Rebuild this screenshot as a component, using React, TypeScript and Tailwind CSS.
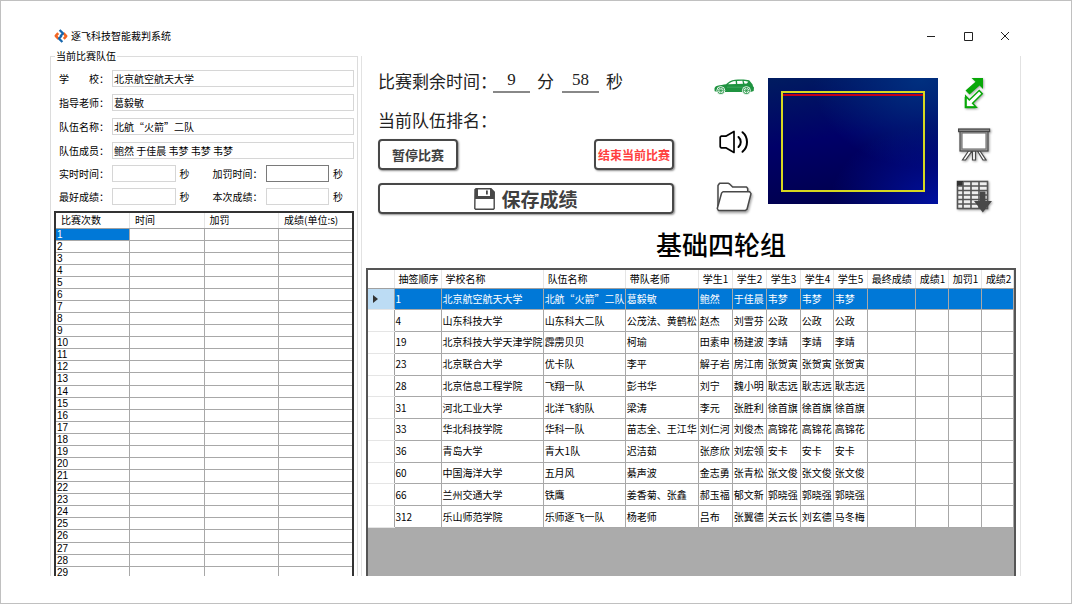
import type { ReactNode } from 'react'

const columns = [
    { name: '', width: 26 },
    { name: '抽签顺序', width: 47 },
    { name: '学校名称', width: 102 },
    { name: '队伍名称', width: 82 },
    { name: '带队老师', width: 73 },
    { name: '学生1', width: 34 },
    { name: '学生2', width: 34 },
    { name: '学生3', width: 34 },
    { name: '学生4', width: 33 },
    { name: '学生5', width: 34 },
    { name: '最终成绩', width: 48 },
    { name: '成绩1', width: 33 },
    { name: '加罚1', width: 33 },
    { name: '成绩2', width: 32 },
]

const teams = [
    ['1', '北京航空航天大学', '北航“火箭”二队', '葛毅敏', '鲍然', '于佳晨', '韦梦', '韦梦', '韦梦'],
    ['4', '山东科技大学', '山东科大二队', '公茂法、黄鹤松', '赵杰', '刘雪芬', '公政', '公政', '公政'],
    ['19', '北京科技大学天津学院', '霹雳贝贝', '柯瑜', '田素申', '杨建波', '李靖', '李靖', '李靖'],
    ['23', '北京联合大学', '优卡队', '李平', '解子岩', '房江南', '张贺寅', '张贺寅', '张贺寅'],
    ['28', '北京信息工程学院', '飞翔一队', '彭书华', '刘宁', '魏小明', '耿志远', '耿志远', '耿志远'],
    ['31', '河北工业大学', '北洋飞豹队', '梁涛', '李元', '张胜利', '徐首旗', '徐首旗', '徐首旗'],
    ['33', '华北科技学院', '华科一队', '苗志全、王江华', '刘仁河', '刘俊杰', '高锦花', '高锦花', '高锦花'],
    ['36', '青岛大学', '青大1队', '迟洁茹', '张彦欣', '刘宏领', '安卡', '安卡', '安卡'],
    ['60', '中国海洋大学', '五月风', '綦声波', '金志勇', '张青松', '张文俊', '张文俊', '张文俊'],
    ['66', '兰州交通大学', '铁鹰', '姜香菊、张鑫', '郝玉福', '郁文新', '郭晓强', '郭晓强', '郭晓强'],
    ['312', '乐山师范学院', '乐师逐飞一队', '杨老师', '吕布', '张翼德', '关云长', '刘玄德', '马冬梅'],
]

const info = [
    { id: 'school', label: '学　　校：', value: '北京航空航天大学' },
    { id: 'teacher', label: '指导老师：', value: '葛毅敏' },
    { id: 'team', label: '队伍名称：', value: '北航“火箭”二队' },
    { id: 'members', label: '队伍成员：', value: '鲍然 于佳晨 韦梦 韦梦 韦梦' },
]

const rounds = Array.from({ length: 29 }, (_, i) => i + 1)

function TimeField({ id, label, active }: { id: string, label: string, active?: boolean }) {
    return (
        <div className="flex min-w-0 flex-1 items-center">
            <label htmlFor={id} className="w-[53px] shrink-0">{label}</label>
            <input
                id={id}
                className={active ? 'h-[17px] w-0 flex-1 border border-[#7a7a7a] px-px' : 'h-[17px] w-0 flex-1 border border-[#d6d6d6] px-px'}
            />
            <span className="ml-1">秒</span>
        </div>
    )
}

function IconButton({ label, children }: { label: string, children: ReactNode }) {
    return (
        <button aria-label={label} className="flex h-9 w-10 items-center justify-center">
            {children}
        </button>
    )
}

function Logo() {
    return (
        <svg width="14" height="14" viewBox="0 0 14 14" fill="none" strokeWidth="2.6" strokeLinejoin="round">
            <path d="M4.2 4.2 1.8 6.8 4.6 10" stroke="#f26522" />
            <path d="M9.8 9.8 12.2 7.2 9.4 4" stroke="#f26522" />
            <path d="M5.600 1 9 4.400 6.300 7.200" stroke="#1767ad" strokeWidth="2.2" />
            <path d="M8.400 13 5 9.600 7.700 6.800" stroke="#1767ad" strokeWidth="2.2" />
        </svg>
    )
}

function CarIcon() {
    return (
        <svg width="40" height="16" viewBox="0 0 40 16">
            <path d="M.5 10.8C.2 8.6 1.2 7.4 3.5 6.8 6.2 6 9.4 5.7 12 5.2 14.3 3.2 17.3 1.1 21 .8 26 .3 32 .4 35.2 1.3L38.6 5.6 39 7.2 40 8.6 39.7 12 36.6 13H4L.7 12.2z" fill="#1f9340" />
            <path d="M14 5.3C16.2 3.4 18.4 2.2 21.6 2L21.9 5zM23 1.9 28.4 1.8 29 4.8 23.3 5zM29.6 1.9C31.6 1.9 33 2.2 34.3 2.8L32.8 4.4 30.6 4.7z" fill="#fff" />
            <path d="M4 8.3 6 7.6M13 8.2h19" stroke="#5fb67a" strokeWidth=".5" />
            <g fill="#1f9340" stroke="#fff" strokeWidth=".9">
                <circle cx="6.8" cy="11.6" r="4" />
                <circle cx="32.4" cy="11.6" r="4" />
            </g>
            <g fill="#fff">
                <circle cx="6.8" cy="11.6" r="2.7" />
                <circle cx="32.4" cy="11.6" r="2.7" />
            </g>
            <path d="M6.8 9v5.2M4.2 11.6h5.2M5 9.8l3.6 3.6M8.6 9.8 5 13.4M32.4 9v5.2M29.8 11.6H35M30.6 9.8l3.6 3.6M34.2 9.8l-3.6 3.6" stroke="#1f9340" strokeWidth=".7" />
        </svg>
    )
}

function SpeakerIcon() {
    return (
        <svg width="30" height="24" viewBox="0 0 30 24" fill="none" stroke="#000" strokeWidth="1.7" strokeLinecap="round" strokeLinejoin="round">
            <path d="M2.200 6.200h4.600l8.200-4.700v21l-8.200-4.700H2.200L1.200 16.800V7.200z" />
            <path d="M19.5 7c3 2.600 3 7.400 0 10M23.500 2.200c6 5 6 14.600 0 19.600" strokeWidth="2" />
        </svg>
    )
}

function FolderIcon() {
    return (
        <svg width="36" height="30" viewBox="0 0 36 30" className="drop-shadow-[1px_2px_1px_rgba(0,0,0,0.35)]">
            <g fill="#fff" stroke="#484848" strokeWidth="1.5" strokeLinejoin="round">
                <path d="M2 27V3.5L3.6 1.2H12l1.6.8 3 3H30.5l1.2 1.5V11" />
                <path d="M7 9.8 5.6 11 1.3 26.5 2.4 28.5H29.4L31 27.2 35 11.6 33.8 9.8z" />
            </g>
        </svg>
    )
}

function SwapIcon() {
    return (
        <svg width="20" height="32" viewBox="0 0 20 32" className="drop-shadow-[1px_1px_1px_rgba(0,0,0,0.35)]">
            <path d="M7.5 1H19V12L15.6 8.600 5.500 17.500 1.500 13.500 11.500 4.800z" fill="#08a808" />
            <path d="M15.200 13.500 18.200 16.700 8.600 26.200 12.200 30.200H1.700V19.200L5.300 23z" fill="#fff" stroke="#08a808" strokeWidth="1.5" />
            <path d="M1.700 20V30.200H11.500" fill="none" stroke="#08a808" strokeWidth="2" />
        </svg>
    )
}

function BoardIcon() {
    return (
        <svg width="34" height="34" viewBox="0 0 34 34" className="drop-shadow-[1px_1px_1px_rgba(0,0,0,0.35)]">
            <g fill="#fff" stroke="#484848" strokeWidth="1.2">
                <path d="M11.5 23 5.5 32H8.5L15 23zM20.5 23 26 32H29L23 23zM15.5 23v9h3v-9z" />
                <rect x="3" y="3" width="28" height="20" fill="#aaa" />
                <rect x="5" y="5" width="24" height="16" stroke="#777" />
                <rect x="1.6" y="1" width="31" height="2.6" fill="#888" />
            </g>
        </svg>
    )
}

function GridDownIcon() {
    return (
        <svg width="36" height="34" viewBox="0 0 36 34" className="drop-shadow-[1px_1px_1px_rgba(0,0,0,0.35)]">
            <rect x="1.5" y="1.500" width="30" height="27" fill="#eee" stroke="#555" strokeWidth="1.6" />
            <path d="M1 1h6v5H1z" fill="#333" />
            <path d="M2 6h29M2 10.500h29M2 15h29M2 19.500h29M2 24h29M7 2v26M15 2v26M23 2v26" stroke="#555" strokeWidth="1.6" />
            <path d="M24 11.500h5.500V21H36L26.800 32.500 18 21h6z" fill="#484848" />
        </svg>
    )
}

function SaveIcon() {
    return (
        <svg width="21" height="22" viewBox="0 0 21 22">
            <path d="M1 1.5 2 .8H17L20.2 4V20.4L19.4 21.2H1.600L.8 20.400z" fill="#fff" stroke="#484848" strokeWidth="1.4" />
            <path d="M1 1H4v7h12V1h1L20.400 4V11H1z" fill="#484848" />
            <path d="M12 2.500h1.800v4H12z" fill="#484848" />
        </svg>
    )
}

function TeamPanel() {
    return (
        <fieldset className="min-w-0 border-x border-t border-[#dcdcdc] px-[3px]">
            <legend className="ml-px px-px text-[10px] leading-4">当前比赛队伍</legend>
            <div className="flex flex-col gap-[7px] pt-[6px] pl-[5px]">
                {info.map((item) => (
                    <div key={item.id} className="flex items-center">
                        <label htmlFor={item.id} className="w-[53px] shrink-0">{item.label}</label>
                        <input id={item.id} readOnly value={item.value} className="h-[17px] w-0 flex-1 border border-[#d6d6d6] px-px" />
                    </div>
                ))}
            </div>
            <div className="mt-[6px] flex flex-col gap-[6px] pr-[11px] pl-[5px]">
                <div className="flex gap-[23px]">
                    <TimeField id="now" label="实时时间：" />
                    <TimeField id="penalty" label="加罚时间：" active />
                </div>
                <div className="flex gap-[23px]">
                    <TimeField id="best" label="最好成绩：" />
                    <TimeField id="current" label="本次成绩：" />
                </div>
            </div>
            <table className="mt-[6px] h-[369px] w-full table-fixed border-collapse border-2 border-[#333]">
                <thead>
                    <tr className="h-4 text-left">
                        {['比赛次数', '时间', '加罚', '成绩(单位:s)'].map((name) => (
                            <th key={name} className="border-r border-b border-r-[#e5e5e5] border-b-[#a0a0a0] pl-[5px] font-normal last:border-r-[#333]">{name}</th>
                        ))}
                    </tr>
                </thead>
                <tbody className="font-['Liberation_Sans',sans-serif]">
                    {rounds.map((n) => (
                        <tr key={n} className="leading-[11px]">
                            <td className={n === 1 ? 'border border-[#a8a8a8] border-l-[#333] bg-[#0078d7] pl-px text-white' : 'border border-[#a8a8a8] border-l-[#333] pl-px'}>{n}</td>
                            <td className="border border-[#a8a8a8]"></td>
                            <td className="border border-[#a8a8a8]"></td>
                            <td className="border border-[#a8a8a8] border-r-[#333]"></td>
                        </tr>
                    ))}
                </tbody>
            </table>
        </fieldset>
    )
}

function Controls() {
    return (
        <div className="flex min-w-0 flex-1 flex-col pb-px text-[17px] leading-6">
            <div className="flex text-[#222]">
                <span>比赛剩余时间：</span>
                <input aria-label="分" readOnly value="9" className="-ml-1 h-6 w-[37px] border-b-2 border-[#888] text-center font-['Liberation_Serif',serif]" />
                <span className="ml-[7px]">分</span>
                <input aria-label="秒" readOnly value="58" className="ml-2 h-6 w-[37px] border-b-2 border-[#888] text-center font-['Liberation_Serif',serif]" />
                <span className="ml-[7px]">秒</span>
            </div>
            <p className="mt-[15px] text-[#222]">当前队伍排名：</p>
            <div className="mt-[7px] flex justify-between font-bold">
                <button className="h-[31px] w-20 rounded-[4px] border-2 border-[#484848] text-[13px] leading-4 text-[#404040] shadow-[1px_1px_2px_rgba(0,0,0,0.45)]">暂停比赛</button>
                <button className="h-[31px] w-20 rounded-[4px] border-2 border-[#484848] text-[12px] leading-4 whitespace-nowrap text-[#ff4040] shadow-[1px_1px_2px_rgba(0,0,0,0.45)]">结束当前比赛</button>
            </div>
            <button className="mt-[13px] flex h-[31px] items-center justify-center gap-[6px] rounded-[4px] border-2 border-[#484848] text-[19px] font-bold text-[#404040] shadow-[1px_1px_2px_rgba(0,0,0,0.45)]">
                <SaveIcon />
                保存成绩
            </button>
        </div>
    )
}

function Camera() {
    return (
        <div className="mb-[11px] ml-[14px] h-[126px] w-[170px] shrink-0 bg-[radial-gradient(ellipse_at_100%_100%,#0010a0_0%,transparent_45%),radial-gradient(ellipse_at_90%_0%,#003080_0%,transparent_50%),linear-gradient(170deg,#001c60_0%,#000068_45%,#000046_100%)] p-[13px] pb-3">
            <div className="h-full border-2 border-[#d8d820] pt-px">
                <div className="h-[2px] bg-[#c00018]"></div>
            </div>
        </div>
    )
}

function TeamTable() {
    return (
        <div className="mt-[6px] flex-1 border-x-2 border-t-2 border-[#555] bg-[#ababab]">
            <table className="h-[258px] w-full table-fixed border-collapse bg-white whitespace-nowrap">
                <colgroup>
                    {columns.map((col, i) => <col key={i} style={{ width: col.width }} />)}
                </colgroup>
                <thead>
                    <tr className="h-[18px] text-left">
                        {columns.map((col, i) => (
                            <th key={i} className="border-r border-b border-r-[#e5e5e5] border-b-[#a0a0a0] pl-1 font-normal">{col.name}</th>
                        ))}
                    </tr>
                </thead>
                <tbody>
                    {teams.map((team, row) => (
                        <tr key={team[0]} className={row === 0 ? 'bg-[#0078d7] text-white' : ''}>
                            <td className={row === 0 ? 'border-r border-b border-r-[#a0a0a0] border-b-[#e5e5e5] bg-[#bcdcf4]' : 'border-r border-b border-r-[#a0a0a0] border-b-[#e5e5e5]'}>
                                {row === 0 && (
                                    <svg width="5" height="8" viewBox="0 0 5 8" className="ml-[5px]">
                                        <path d="M0 0 5 4 0 8z" fill="#333" />
                                    </svg>
                                )}
                            </td>
                            {columns.slice(1).map((col, i) => (
                                <td key={col.name} className="border border-[#a8a8a8] pl-px">{team[i]}</td>
                            ))}
                        </tr>
                    ))}
                </tbody>
            </table>
        </div>
    )
}

export default function App() {
    return (
        <div className="flex h-screen flex-col overflow-hidden border border-[#c0c0c0] bg-white pt-[23px] pr-[50px] pb-[27px] pl-[49px] font-['Noto_Sans_CJK_SC',sans-serif] text-[10px] leading-[14px] text-black">
            <header className="flex h-6 shrink-0 items-center pr-[6px] pl-1">
                <Logo />
                <h1 className="ml-[3px] flex-1">逐飞科技智能裁判系统</h1>
                <div className="flex gap-[17px]">
                    <button aria-label="最小化" className="flex h-5 w-5 items-center justify-center">
                        <svg width="10" height="10" stroke="#222"><path d="M1 5.5h8" /></svg>
                    </button>
                    <button aria-label="最大化" className="flex h-5 w-5 items-center justify-center">
                        <svg width="10" height="10" stroke="#222" fill="none"><path d="M1.500 1.500h8v8h-8z" /></svg>
                    </button>
                    <button aria-label="关闭" className="flex h-5 w-5 items-center justify-center">
                        <svg width="10" height="10" stroke="#222"><path d="M1 1l8 8M9 1 1 9" /></svg>
                    </button>
                </div>
            </header>
            <main className="grid min-h-0 flex-1 grid-cols-[308fr_660fr] gap-[3px] overflow-hidden">
                <TeamPanel />
                <section className="mt-2 flex min-w-0 flex-col border-x border-[#e2e2e2] px-[4px]">
                    <div className="flex items-end pt-[13px] pr-[22px] pl-3">
                        <Controls />
                        <div className="ml-10 flex flex-col gap-[19px]">
                            <IconButton label="车辆"><CarIcon /></IconButton>
                            <IconButton label="声音"><SpeakerIcon /></IconButton>
                            <IconButton label="打开文件"><FolderIcon /></IconButton>
                        </div>
                        <Camera />
                        <div className="ml-4 flex flex-col gap-4">
                            <IconButton label="切换"><SwapIcon /></IconButton>
                            <IconButton label="展示"><BoardIcon /></IconButton>
                            <IconButton label="导出表格"><GridDownIcon /></IconButton>
                        </div>
                    </div>
                    <h2 className="mt-[11px] pl-[60px] text-center text-[26px] leading-9 font-medium">基础四轮组</h2>
                    <TeamTable />
                </section>
            </main>
        </div>
    )
}
